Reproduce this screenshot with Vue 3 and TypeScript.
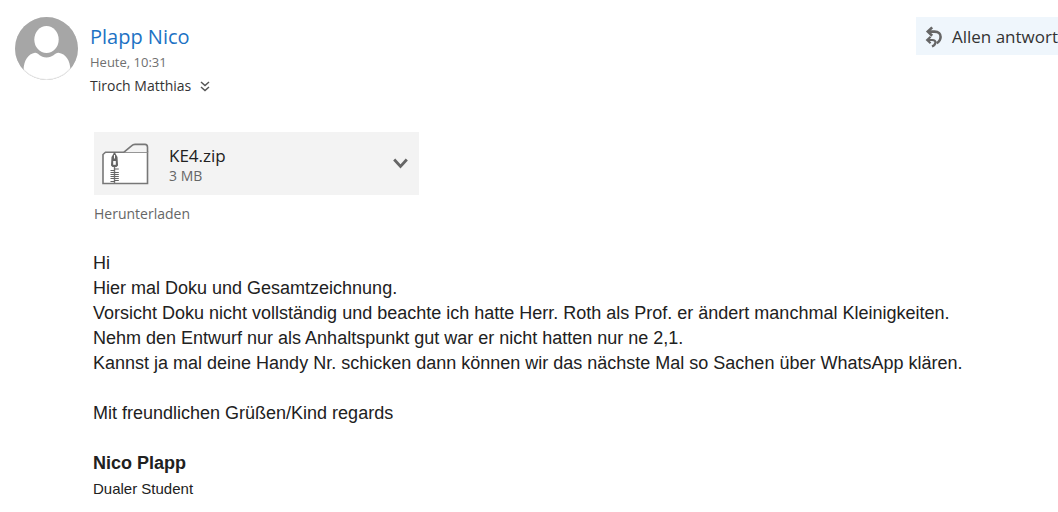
<script setup lang="ts">
interface Attachment {
  name: string
  size: string
}

const attachment: Attachment = { name: 'KE4.zip', size: '3 MB' }

const lines: string[] = [
  'Hi',
  'Hier mal Doku und Gesamtzeichnung.',
  'Vorsicht Doku nicht vollständig und beachte ich hatte Herr. Roth als Prof. er ändert manchmal Kleinigkeiten.',
  'Nehm den Entwurf nur als Anhaltspunkt gut war er nicht hatten nur ne 2,1.',
  'Kannst ja mal deine Handy Nr. schicken dann können wir das nächste Mal so Sachen über WhatsApp klären.',
]
</script>

<template>
  <article class="mail">
    <header class="head">
      <svg class="avatar" viewBox="0 0 63 63" aria-hidden="true">
        <defs>
          <clipPath id="disc"><circle cx="31.5" cy="31.5" r="31.5" /></clipPath>
        </defs>
        <g clip-path="url(#disc)">
          <rect width="63" height="63" fill="#a6a6a6" />
          <ellipse cx="31.5" cy="22.5" rx="12.2" ry="13.6" fill="#fff" />
          <path d="M8.5 63V53C9 43 13 37 20 35.7C23.5 35.5 25 40.5 31.5 40.5C38 40.5 40 35.5 43.5 35.7C51 37 55 43 55.5 53V63Z" fill="#fff" />
        </g>
        <circle cx="31.5" cy="31.5" r="31" fill="none" stroke="#a6a6a6" stroke-opacity=".25" />
      </svg>
      <div class="sender">
        <a class="name" href="#">Plapp Nico</a>
        <time class="time">Heute, 10:31</time>
        <div class="to">
          <span>Tiroch Matthias</span>
          <button class="expand" type="button" aria-label="Details anzeigen">
            <svg width="10" height="11" viewBox="0 0 10 11" aria-hidden="true">
              <path d="M1 1L5 4.5L9 1M1 6L5 9.5L9 6" fill="none" stroke="#555" stroke-width="1.5" />
            </svg>
          </button>
        </div>
      </div>
      <button class="reply" type="button">
        <svg width="18" height="22" viewBox="0 0 18 22" aria-hidden="true">
          <g fill="none" stroke="#666">
            <path d="M7.2 1.4L2.8 5.6L7.2 9.8" stroke-width="2.6" />
            <path d="M3 5.6H9.5C13.6 5.6 15.8 7.8 15.6 11C15.4 14.2 13.6 16.2 11.6 17.2" stroke-width="2.6" />
            <path d="M5.6 10.8L2.2 14L5.6 17.2" stroke-width="2.2" />
            <path d="M2.5 14H7.2C9.6 14 10.6 15.2 10.4 16.8C10.1 18.6 8.8 19.8 7 20.6" stroke-width="2.2" />
          </g>
        </svg>
        <span>Allen antwort</span>
      </button>
    </header>

    <section class="attachments">
      <div class="file">
        <svg class="folder" width="48" height="42" viewBox="0 0 48 42" aria-hidden="true">
          <path d="M1 40.5V11.5L3.5 9.2H45.5V40.5Z" fill="#fff" stroke="#777" stroke-width="1.6" />
          <path d="M22 9.2L29.5 2.8Q31 1.4 33 1.4H43Q45.5 1.4 45.5 4.2V9.2" fill="#f3f3f3" stroke="#777" stroke-width="1.6" />
          <path d="M12.5 10V40" stroke="#777" stroke-width="1.4" />
          <path d="M12.5 9L15.5 14L16 22.5L14.5 24H10.5L9 22.5L9.5 14Z" fill="#666" />
          <path d="M12.5 12V15.5" stroke="#fff" stroke-width="1" />
          <rect x="11.2" y="18" width="2.6" height="3.8" fill="#fff" />
          <path d="M8.5 27.5H13M12 29.5H16.8M8.5 31.5H13M12 33.5H16.8M8.5 35.5H13M12 37.5H16.8M12 26H16.8M8.5 29.5H13M12 31.5H16.8M8.5 33.5H13M12 35.5H16.8M8.5 38.5H13" stroke="#666" stroke-width="1.1" />
        </svg>
        <div class="meta">
          <span class="filename">{{ attachment.name }}</span>
          <span class="size">{{ attachment.size }}</span>
        </div>
        <button class="more" type="button" aria-label="Weitere Aktionen">
          <svg width="15" height="11" viewBox="0 0 15 11" aria-hidden="true">
            <path d="M1.2 1.5L7.5 8.5L13.8 1.5" fill="none" stroke="#666" stroke-width="2.8" />
          </svg>
        </button>
      </div>
      <a class="download" href="#">Herunterladen</a>
    </section>

    <section class="body">
      <p v-for="line in lines" :key="line">{{ line }}</p>
      <p class="regards">Mit freundlichen Grüßen/Kind regards</p>
      <p class="signature">Nico Plapp</p>
      <p class="role">Dualer Student</p>
    </section>
  </article>
</template>

<style>
body {
  margin: 0;
  background: #fff;
}
</style>

<style scoped>
.mail {
  padding-top: 17px;
  overflow: hidden;
  color: #212121;
  font-family: "Segoe UI", "Open Sans", "Noto Sans", sans-serif;
}
button {
  margin: 0;
  padding: 0;
  border: 0;
  background: none;
  color: inherit;
  font: inherit;
}
a {
  text-decoration: none;
}
.head {
  display: flex;
  align-items: flex-start;
  padding-left: 15px;
}
.avatar {
  flex: none;
  width: 63px;
  height: 63px;
  margin-right: 12px;
}
.sender {
  display: flex;
  flex: 1;
  flex-direction: column;
  align-items: flex-start;
  padding-top: 5px;
}
.name {
  color: #1c72c4;
  font-size: 20px;
  line-height: 30px;
}
.time {
  color: #707070;
  font-size: 13px;
  line-height: 20px;
}
.to {
  display: flex;
  align-items: center;
  gap: 9px;
  color: #333;
  font-size: 14px;
  line-height: 28px;
}
.expand {
  display: flex;
}
.reply {
  display: flex;
  flex: none;
  align-items: center;
  gap: 9px;
  height: 38px;
  padding: 2px 0 0 9px;
  background: #eff6fc;
  color: #333;
  font-size: 17px;
  line-height: 36px;
  white-space: nowrap;
}
.attachments {
  padding: 32px 0 0 94px;
}
.file {
  display: flex;
  align-items: center;
  box-sizing: border-box;
  max-width: 325px;
  height: 63px;
  padding: 0 11px 0 8px;
  background: #f3f3f3;
}
.folder {
  flex: none;
  margin-right: 19px;
}
.meta {
  display: flex;
  flex: 1;
  flex-direction: column;
  padding-top: 2px;
}
.filename {
  font-size: 17px;
  line-height: 22px;
}
.size {
  color: #666;
  font-size: 14px;
  line-height: 18px;
}
.more {
  display: flex;
}
.download {
  display: inline-block;
  margin-top: 8px;
  color: #666;
  font-size: 14px;
  line-height: 22px;
}
.body {
  padding: 26px 0 12px 93px;
  font-family: Arial, "Liberation Sans", sans-serif;
  font-size: 18px;
  line-height: 25px;
}
.body p {
  margin: 0;
}
.body .regards,
.body .signature {
  margin-top: 25px;
}
.signature {
  font-weight: 700;
}
.body .role {
  font-size: 15px;
}
</style>
